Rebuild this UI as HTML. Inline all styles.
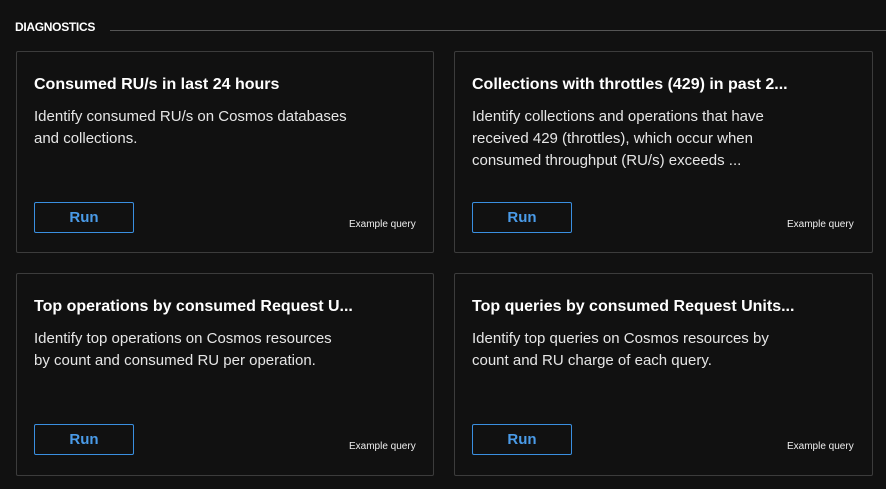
<!DOCTYPE html>
<html><head><style>
body{margin:0;background:#111111;width:886px;height:489px;overflow:hidden;font-family:"Liberation Sans",sans-serif;color:#fff;position:relative}
.hdr{position:absolute;left:15px;top:20px;font-size:12px;font-weight:bold;letter-spacing:-0.3px}
.line{position:absolute;left:110px;right:0;top:30px;height:1px;background:#555}
.card{position:absolute;border:1px solid #3c3c3c;border-radius:2px;box-sizing:border-box}
.t{position:absolute;left:17px;top:24px;font-size:16px;font-weight:bold;white-space:nowrap}
.d{position:absolute;left:17px;top:54px;font-size:15px;line-height:22px;color:#e6e6e6;white-space:nowrap}
.b{position:absolute;left:17px;top:150px;width:98px;height:29px;border:1px solid #3a8fe0;border-radius:2px;color:#4a9be8;font-size:15px;font-weight:bold;text-align:center;line-height:29px}
.e{position:absolute;left:332px;top:167px;font-size:10px;color:#eee}
</style></head><body>
<div class="hdr">DIAGNOSTICS</div><div class="line"></div>
<div class="card" style="left:16px;top:51px;width:418px;height:202px"><div class="t">Consumed RU/s in last 24 hours</div><div class="d">Identify consumed RU/s on Cosmos databases<br>and collections.</div><div class="b">Run</div><div class="e">Example query</div></div>
<div class="card" style="left:454px;top:51px;width:419px;height:202px"><div class="t">Collections with throttles (429) in past 2...</div><div class="d">Identify collections and operations that have<br>received 429 (throttles), which occur when<br>consumed throughput (RU/s) exceeds ...</div><div class="b">Run</div><div class="e">Example query</div></div>
<div class="card" style="left:16px;top:273px;width:418px;height:203px"><div class="t">Top operations by consumed Request U...</div><div class="d">Identify top operations on Cosmos resources<br>by count and consumed RU per operation.</div><div class="b">Run</div><div class="e">Example query</div></div>
<div class="card" style="left:454px;top:273px;width:419px;height:203px"><div class="t">Top queries by consumed Request Units...</div><div class="d">Identify top queries on Cosmos resources by<br>count and RU charge of each query.</div><div class="b">Run</div><div class="e">Example query</div></div>
</body></html>
